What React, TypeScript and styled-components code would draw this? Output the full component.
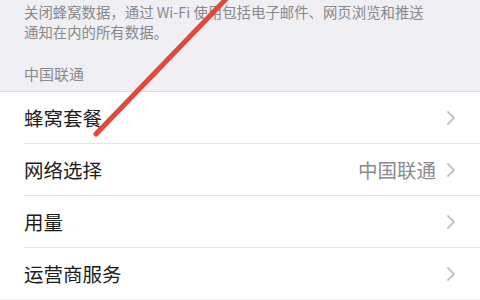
import styled, { createGlobalStyle } from 'styled-components';

const GlobalStyle = createGlobalStyle`
  html, body {
    margin: 0;
    padding: 0;
    background: #efeff4;
  }
  body {
    font-family: "Noto Sans CJK SC", "Liberation Sans", sans-serif;
    -webkit-font-smoothing: antialiased;
  }
`;

const Screen = styled.div`
  position: relative;
  width: 480px;
  height: 300px;
  overflow: hidden;
  background: #efeff4;
`;

const FooterNote = styled.p`
  margin: 0;
  padding: 2px 24px 0 24px;
  font-size: 14.4px;
  line-height: 19.5px;
  color: #88888d;
  white-space: nowrap;
`;

const SectionHeader = styled.div`
  padding: 23px 24px 8px 24px;
  font-size: 15px;
  line-height: 19px;
  color: #88888d;
`;

const List = styled.div`
  background: #fff;
  border-top: 1px solid #dedee2;
`;

const Row = styled.div<{ $last?: boolean }>`
  display: flex;
  align-items: center;
  height: 51px;
  margin-left: 24px;
  padding-right: 25px;
  border-bottom: ${(p) => (p.$last ? 'none' : '1px solid #e4e4e7')};
`;

const Label = styled.span`
  flex: 1;
  font-size: 19.5px;
  color: #1c1c1c;
`;

const Detail = styled.span`
  font-size: 19.5px;
  color: #8a8a8f;
  margin-right: 11px;
`;

const Chevron = styled.svg`
  width: 8px;
  height: 14px;
  flex: none;
`;

const Annotation = styled.svg`
  position: absolute;
  left: 0;
  top: 0;
  pointer-events: none;
`;

const ChevronIcon = () => (
  <Chevron viewBox="0 0 8 14">
    <path d="M1 1l6 6-6 6" fill="none" stroke="#c4c4c8" strokeWidth="1.8" strokeLinecap="round" strokeLinejoin="round" />
  </Chevron>
);

const rows: { label: string; detail?: string }[] = [
  { label: '蜂窝套餐' },
  { label: '网络选择', detail: '中国联通' },
  { label: '用量' },
  { label: '运营商服务' },
];

export default function App() {
  return (
    <Screen>
      <GlobalStyle />
      <FooterNote>
        关闭蜂窝数据，通过 Wi-Fi 使用包括电子邮件、网页浏览和推送
        <br />
        通知在内的所有数据。
      </FooterNote>
      <SectionHeader>中国联通</SectionHeader>
      <List>
        {rows.map((r, i) => (
          <Row key={r.label} $last={i === rows.length - 1}>
            <Label>{r.label}</Label>
            {r.detail && <Detail>{r.detail}</Detail>}
            <ChevronIcon />
          </Row>
        ))}
      </List>
      <Annotation width="480" height="300" viewBox="0 0 480 300">
        <line x1="96" y1="134" x2="228" y2="-3" stroke="#e0493b" strokeWidth="5" strokeLinecap="round" />
      </Annotation>
    </Screen>
  );
}
